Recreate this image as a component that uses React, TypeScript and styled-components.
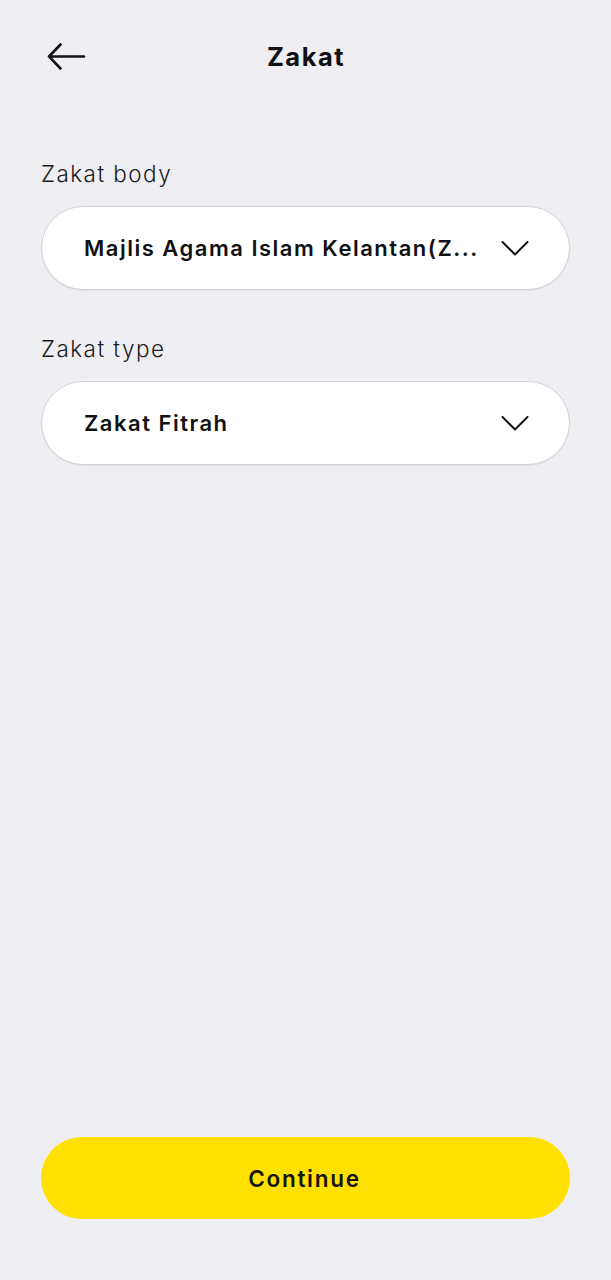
import React from "react";
import styled, { createGlobalStyle } from "styled-components";

const GlobalStyle = createGlobalStyle`
  html, body {
    margin: 0;
    padding: 0;
    background: #eeeef3;
  }
  * { box-sizing: border-box; }
`;

const Page = styled.div`
  min-height: 1280px;
  display: flex;
  flex-direction: column;
  padding: 0 41px 61px 41px;
  background: #eeeef3;
  font-family: Inter, "Open Sans", "Liberation Sans", sans-serif;
  color: #111114;
`;

const Header = styled.header`
  height: 112px;
  display: grid;
  grid-template-columns: 60px 1fr 60px;
  align-items: center;
`;

const BackButton = styled.button`
  border: none;
  background: none;
  padding: 0 0 0 6px;
  margin: 0;
  display: flex;
  align-items: center;
  height: 40px;
  cursor: pointer;
`;

const Title = styled.h1`
  margin: 0;
  padding-left: 1px;
  text-align: center;
  font-size: 25.5px;
  font-weight: 700;
  letter-spacing: 1.5px;
  color: #111114;
`;

const Field = styled.div<{ $top: number }>`
  display: flex;
  flex-direction: column;
  gap: 18px;
  margin-top: ${(p) => p.$top}px;
`;

const Label = styled.label`
  font-size: 22.5px;
  line-height: 28px;
  font-weight: 300;
  color: #1c1c20;
  letter-spacing: 1.45px;
`;

const Select = styled.div`
  height: 84px;
  border-radius: 42px;
  background: #ffffff;
  border: 1px solid #d3d3d8;
  box-shadow: 0 1px 1px rgba(0, 0, 0, 0.06);
  display: flex;
  align-items: center;
  justify-content: space-between;
  padding: 0 40px 0 42px;
`;

const SelectValue = styled.span`
  font-size: 22px;
  font-weight: 600;
  letter-spacing: 1.5px;
  color: #111114;
  white-space: nowrap;
`;

const Spacer = styled.div`
  flex: 1;
`;

const ContinueButton = styled.button`
  height: 82px;
  border: none;
  border-radius: 41px;
  background: #ffe000;
  padding-left: 4px;
  font-family: Inter, "Open Sans", "Liberation Sans", sans-serif;
  font-size: 22.5px;
  font-weight: 600;
  letter-spacing: 1.7px;
  color: #161410;
  cursor: pointer;
`;

const Chevron = () => (
  <svg width="28" height="17" viewBox="0 0 28 17" fill="none">
    <polyline
      points="1.5,2 14,14.5 26.5,2"
      stroke="#141416"
      strokeWidth="2"
      strokeLinecap="round"
      strokeLinejoin="round"
    />
  </svg>
);

const BackArrow = () => (
  <svg width="39" height="27" viewBox="0 0 39 27" fill="none">
    <path
      d="M37 13.5H2M13.5 1.5L2 13.5L13.5 25.5"
      stroke="#141416"
      strokeWidth="2.6"
      strokeLinecap="round"
      strokeLinejoin="round"
    />
  </svg>
);

export default function App() {
  return (
    <>
      <GlobalStyle />
      <Page>
        <Header>
          <BackButton aria-label="Back">
            <BackArrow />
          </BackButton>
          <Title>Zakat</Title>
          <div />
        </Header>

        <Field $top={48}>
          <Label>Zakat body</Label>
          <Select>
            <SelectValue>Majlis Agama Islam Kelantan(Z...</SelectValue>
            <Chevron />
          </Select>
        </Field>

        <Field $top={45}>
          <Label>Zakat type</Label>
          <Select>
            <SelectValue>Zakat Fitrah</SelectValue>
            <Chevron />
          </Select>
        </Field>

        <Spacer />
        <ContinueButton>Continue</ContinueButton>
      </Page>
    </>
  );
}
